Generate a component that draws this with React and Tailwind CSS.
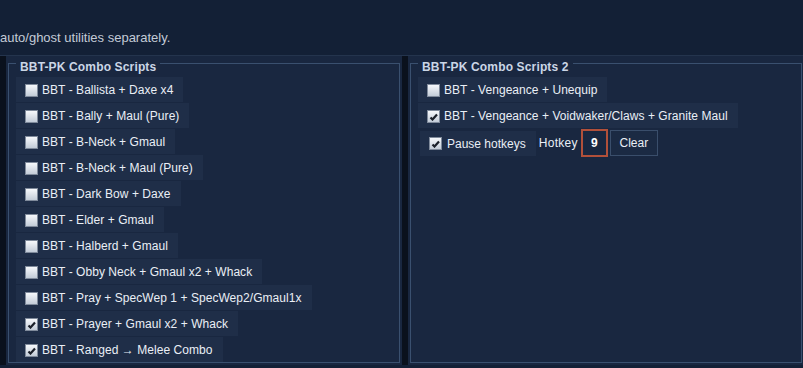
import React from 'react';

const leftScripts = [
  { name: 'BBT - Ballista + Daxe x4', on: false },
  { name: 'BBT - Bally + Maul (Pure)', on: false },
  { name: 'BBT - B-Neck + Gmaul', on: false },
  { name: 'BBT - B-Neck + Maul (Pure)', on: false },
  { name: 'BBT - Dark Bow + Daxe', on: false },
  { name: 'BBT - Elder + Gmaul', on: false },
  { name: 'BBT - Halberd + Gmaul', on: false },
  { name: 'BBT - Obby Neck + Gmaul x2 + Whack', on: false },
  { name: 'BBT - Pray + SpecWep 1 + SpecWep2/Gmaul1x', on: false },
  { name: 'BBT - Prayer + Gmaul x2 + Whack', on: true },
  { name: 'BBT - Ranged \u2192 Melee Combo', on: true },
];

const rightScripts = [
  { name: 'BBT - Vengeance + Unequip', on: false },
  { name: 'BBT - Vengeance + Voidwaker/Claws + Granite Maul', on: true },
];

function Box({ on }) {
  return (
    <span className="flex h-[13px] w-[13px] shrink-0 items-center justify-center border border-[#7f8a9b] bg-gradient-to-b from-[#f6f8fb] to-[#c3ccd8]">
      {on && (
        <svg width="9" height="9" viewBox="0 0 9 9">
          <path d="M1.5 5.5 L3.5 7.5 L8 2.5" fill="none" stroke="#1a1f29" strokeWidth="2.2" />
        </svg>
      )}
    </span>
  );
}

function Row({ item }) {
  return (
    <div className="flex h-[25px] items-center gap-[4px] self-start bg-[#1f2e48] pl-[9px] pr-[10px] pt-[1px]">
      <Box on={item.on} />
      <span className="whitespace-nowrap text-[12px] leading-[14px] tracking-[0.05px] text-[#eaeff6]">{item.name}</span>
    </div>
  );
}

function Group({ title, children }) {
  return (
    <div className="relative flex h-[300px] flex-col gap-[1px] border border-[#3a506f] pl-[7px] pt-[13px]">
      <span className="absolute -top-[4px] left-[7px] bg-[#192740] px-[4px] text-[12px] font-bold leading-[14px] tracking-[0.15px] text-[#cbd6e6]">
        {title}
      </span>
      {children}
    </div>
  );
}

export default function App() {
  return (
    <div
      className="h-[368px] w-[803px] overflow-hidden bg-[#132036]"
      style={{ fontFamily: '"Liberation Sans", Arial, sans-serif' }}
    >
      <div className="h-[56px] border-b border-[#24344d] pt-[30px]">
        <p className="whitespace-nowrap text-[13px] leading-[15px] text-[#c3cbd7]">auto/ghost utilities separately.</p>
      </div>

      <div className="flex h-[309px]">
        <div className="w-[6px] bg-[#0a111d]" />
        <div className="w-[396px] bg-[#192740] px-[2px] pt-[7px]">
          <Group title="BBT-PK Combo Scripts">
            {leftScripts.map((s) => (
              <Row key={s.name} item={s} />
            ))}
          </Group>
        </div>
        <div className="w-[6px] bg-[#0a111d]" />
        <div className="flex-1 bg-[#192740] pl-[2px] pr-[1px] pt-[7px]">
          <Group title="BBT-PK Combo Scripts 2">
            {rightScripts.map((s) => (
              <Row key={s.name} item={s} />
            ))}
            <div className="flex items-center">
              <div className="ml-[2px] flex h-[25px] items-center gap-[5px] bg-[#1f2e48] pl-[9px] pr-[10px] pt-[1px]">
                <Box on />
                <span className="whitespace-nowrap text-[12px] leading-[14px] text-[#eaeff6]">Pause hotkeys</span>
              </div>
              <span className="ml-[3px] text-[12px] leading-[14px] tracking-[0.3px] text-[#eaeff6]">Hotkey</span>
              <div className="ml-[3px] flex h-[28px] w-[27px] items-center justify-center border-2 border-[#b2503a] text-[12px] font-bold text-white">
                9
              </div>
              <button className="ml-[2px] h-[26px] w-[48px] border border-[#3a4e6b] bg-[#1b2a43] text-[12px] leading-[14px] text-[#eaeff6]">
                Clear
              </button>
            </div>
          </Group>
        </div>
      </div>
    </div>
  );
}
